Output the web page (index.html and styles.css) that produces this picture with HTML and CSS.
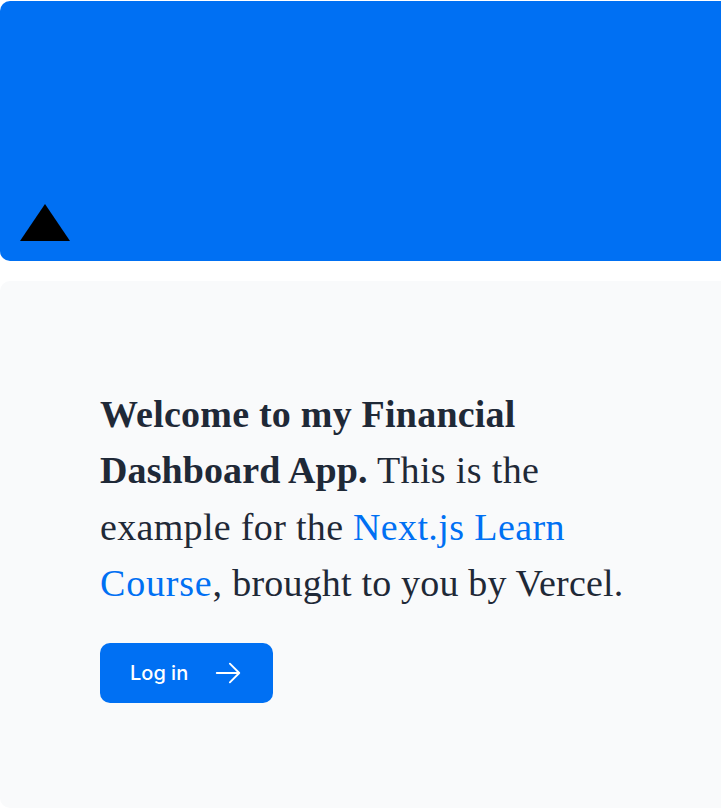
FILE: index.html
```html
<!DOCTYPE html>
<html lang="en">
<head>
<meta charset="utf-8">
<title>Financial Dashboard</title>
<link rel="stylesheet" href="styles.css">
</head>
<body>
<main class="page">
  <header class="banner">
    <svg class="triangle" viewBox="0 0 50 37" width="50" height="37"><path d="M25 0L50 37H0Z"/></svg>
  </header>
  <section class="card">
    <p class="intro">
      <span class="line"><strong class="welcome">Welcome to my Financial</strong></span>
      <span class="line"><strong class="app">Dashboard App.</strong> <span class="this">This is the</span></span>
      <span class="line"><span class="example">example for the</span> <a class="learn" href="#">Next.js Learn</a></span>
      <span class="line"><span class="course"><a href="#">Course</a>,</span> <span class="brought">brought to you by Vercel.</span></span>
    </p>
    <a class="login" href="#"><span>Log in</span>
      <svg class="arrow" viewBox="0 0 24 24" width="30" height="30"><path d="M13.5 4.5 21 12m0 0-7.5 7.5M21 12H3"/></svg>
    </a>
  </section>
</main>
</body>
</html>
```
FILE: styles.css
```css
* { box-sizing: border-box; }
html { overflow: hidden; }
body { margin: 0; background: #fff; }
.page { display: flex; flex-direction: column; gap: 20px; height: 808px; padding-top: 1px; }
.banner { display: flex; align-items: flex-end; height: 260px; padding: 20px; background: #0070f3; border-radius: 10px 0 0 10px; }
.triangle { display: block; }
.card { flex: 1; display: flex; flex-direction: column; align-items: flex-start; padding: 105px 0 0 100px; background: #f9fafb; border-radius: 10px 0 0 10px; }
.intro { margin: 0; color: #1f2937; font: 38px/56.25px "Liberation Serif", serif; }
.line { display: block; white-space: nowrap; }
.welcome { letter-spacing: 0.22px; }
.app { letter-spacing: 0.1px; }
.this { letter-spacing: 0.36px; }
.example { letter-spacing: 0.33px; }
.learn { letter-spacing: 0.4px; }
.course { letter-spacing: 0.8px; }
.brought { letter-spacing: 0.18px; }
.intro a { color: #0070f3; text-decoration: none; }
.login { display: flex; align-items: center; gap: 25px; height: 60px; width: 173px; margin-top: 32px; padding: 0 30px; border-radius: 10px; background: #0070f3; color: #fff; font: 500 20px/30px Inter, sans-serif; text-decoration: none; white-space: nowrap; }
.arrow { flex: none; fill: none; stroke: #fff; stroke-width: 1.5; stroke-linecap: round; stroke-linejoin: round; }
```
